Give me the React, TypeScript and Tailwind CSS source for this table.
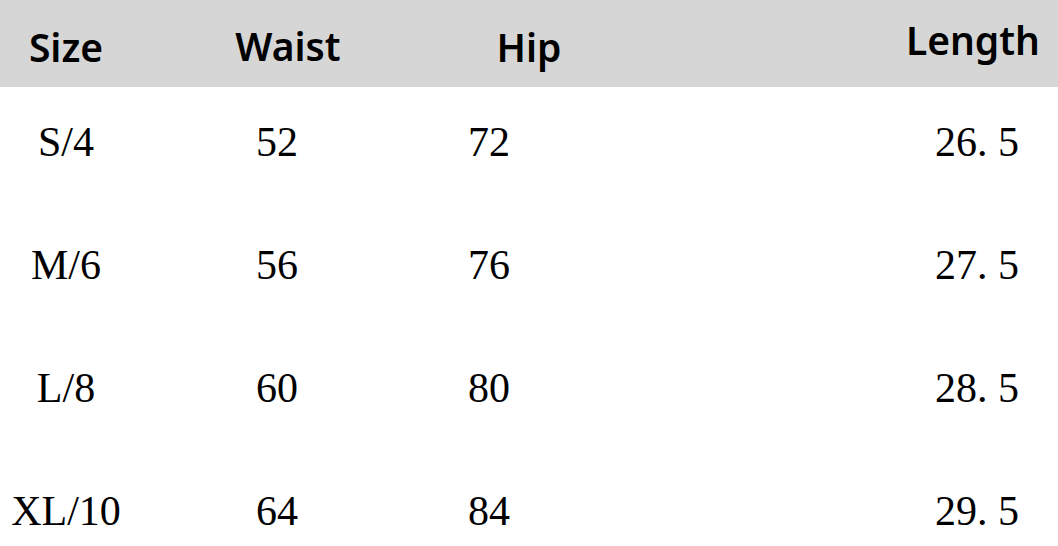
const rows = [
  { size: "S/4", waist: "52", hip: "72", length: "26. 5" },
  { size: "M/6", waist: "56", hip: "76", length: "27. 5" },
  { size: "L/8", waist: "60", hip: "80", length: "28. 5" },
  { size: "XL/10", waist: "64", hip: "84", length: "29. 5" },
];

export default function App() {
  return (
    <div className="w-[1058px] h-[546px] overflow-hidden bg-white text-black">
      {/* Header */}
      <div
        className="flex h-[87px] items-start bg-[#d6d6d6] text-[39px] leading-none font-semibold"
        style={{ fontFamily: '"Noto Sans", "Open Sans", sans-serif' }}
      >
        <div className="w-[132px] pt-[27px] text-center">Size</div>
        <div className="w-[312px] pt-[26px] text-center">Waist</div>
        <div className="w-[170px] pt-[27px] text-center">Hip</div>
        <div className="flex flex-1 justify-end pt-[20px] pr-[18px]">Length</div>
      </div>

      {/* Body */}
      <div
        className="text-[42px] leading-none"
        style={{ fontFamily: '"Liberation Serif", "DejaVu Serif", serif' }}
      >
        {rows.map((r) => (
          <div key={r.size} className="flex h-[123px] items-center pb-[14px]">
            <div className="w-[132px] text-center">{r.size}</div>
            <div className="w-[290px] text-center">{r.waist}</div>
            <div className="w-[134px] text-center">{r.hip}</div>
            <div className="flex flex-1 justify-end pr-[39px] whitespace-pre">{r.length}</div>
          </div>
        ))}
      </div>
    </div>
  );
}
